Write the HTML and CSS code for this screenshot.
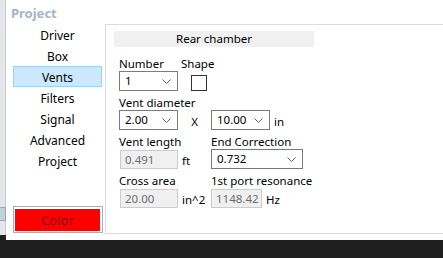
FILE: index.html
```html
<!DOCTYPE html>
<html lang="en">
<head>
    <meta charset="UTF-8">
    <title>Project</title>
    <link rel="stylesheet" href="styles.css">
</head>
<body>
    <div class="screen">
        <div class="edge">
            <div class="edge-icon"></div>
        </div>
        <div class="window">
            <div class="title">Project</div>
            <div class="main">
                <div class="nav">
                    <div class="nav-item">Driver</div>
                    <div class="nav-item">Box</div>
                    <div class="nav-item active">Vents</div>
                    <div class="nav-item">Filters</div>
                    <div class="nav-item">Signal</div>
                    <div class="nav-item">Advanced</div>
                    <div class="nav-item">Project</div>
                    <div class="color-btn"><div class="color-fill">Color</div></div>
                </div>
                <div class="panel">
                    <div class="header">Rear chamber</div>

                    <div class="row">
                        <div class="cell narrow">
                            <div class="label">Number</div>
                            <div class="line">
                                <div class="combo w59"><span>1</span>
                                    <svg width="9" height="5" viewBox="0 0 9 5"><path d="M0.5 0.5 L4.5 4.5 L8.5 0.5" fill="none" stroke="#606060" stroke-width="1"/></svg>
                                </div>
                            </div>
                        </div>
                        <div class="cell">
                            <div class="label">Shape</div>
                            <div class="line"><div class="check"></div></div>
                        </div>
                    </div>

                    <div class="row">
                        <div class="cell">
                            <div class="label">Vent diameter</div>
                            <div class="line">
                                <div class="combo w59"><span>2.00</span>
                                    <svg width="9" height="5" viewBox="0 0 9 5"><path d="M0.5 0.5 L4.5 4.5 L8.5 0.5" fill="none" stroke="#606060" stroke-width="1"/></svg>
                                </div>
                                <div class="times">X</div>
                                <div class="combo w59"><span>10.00</span>
                                    <svg width="9" height="5" viewBox="0 0 9 5"><path d="M0.5 0.5 L4.5 4.5 L8.5 0.5" fill="none" stroke="#606060" stroke-width="1"/></svg>
                                </div>
                                <div class="unit">in</div>
                            </div>
                        </div>
                    </div>

                    <div class="row">
                        <div class="cell wide">
                            <div class="label">Vent length</div>
                            <div class="line">
                                <div class="field w58">0.491</div>
                                <div class="unit">ft</div>
                            </div>
                        </div>
                        <div class="cell">
                            <div class="label">End Correction</div>
                            <div class="line">
                                <div class="combo w92"><span>0.732</span>
                                    <svg width="9" height="5" viewBox="0 0 9 5"><path d="M0.5 0.5 L4.5 4.5 L8.5 0.5" fill="none" stroke="#606060" stroke-width="1"/></svg>
                                </div>
                            </div>
                        </div>
                    </div>

                    <div class="row">
                        <div class="cell wide">
                            <div class="label">Cross area</div>
                            <div class="line">
                                <div class="field w58">20.00</div>
                                <div class="unit">in^2</div>
                            </div>
                        </div>
                        <div class="cell">
                            <div class="label">1st port resonance</div>
                            <div class="line">
                                <div class="field w51">1148.42</div>
                                <div class="unit">Hz</div>
                            </div>
                        </div>
                    </div>
                </div>
            </div>
        </div>
    </div>
</body>
</html>
```

FILE: styles.css
```css
html, body {
    margin: 0;
    padding: 0;
}
body {
    width: 443px;
    height: 258px;
    overflow: hidden;
    background-color: #1f1f1f;
    font-family: "Noto Sans", "Open Sans", sans-serif;
    font-size: 11.5px;
    color: #000;
}
.screen {
    display: flex;
    height: 240px;
}
.edge {
    width: 6px;
    height: 235px;
    background-color: #e4e6ea;
    border-right: 1px solid #c9ccd1;
    display: flex;
    flex-direction: column;
    justify-content: flex-end;
    padding-bottom: 14px;
    box-sizing: border-box;
}
.edge-icon {
    width: 5px;
    height: 12px;
    background-color: #c6d0dc;
    border: 1px solid #9aa6b4;
    border-left: none;
}
.window {
    flex: 1;
    background-color: #fff;
    display: flex;
    flex-direction: column;
}
.title {
    height: 24px;
    padding-left: 5px;
    font-size: 13px;
    font-weight: bold;
    line-height: 26px;
    color: #a6b4c8;
}
.main {
    display: flex;
    height: 210px;
}
.nav {
    width: 99px;
    padding: 0 3px 0 7px;
    box-sizing: border-box;
    display: flex;
    flex-direction: column;
    font-size: 12px;
}
.nav-item {
    height: 21px;
    line-height: 21px;
    text-align: center;
    border: 1px solid transparent;
    box-sizing: border-box;
}
.nav-item.active {
    background-color: #cce8ff;
    border-color: #99d1ff;
}
.color-btn {
    margin-top: auto;
    margin-bottom: 1px;
    width: 90px;
    height: 27px;
    border: 1px solid #adadad;
    padding: 2px 2px 1px 1px;
    box-sizing: border-box;
}
.color-fill {
    height: 100%;
    background-color: #ff0000;
    color: #8a0a0a;
    text-align: center;
    line-height: 22px;
    font-size: 13px;
}
.panel {
    flex: 1;
    border-top: 1px solid #dcdcdc;
    border-left: 1px solid #dcdcdc;
    border-bottom: 1px solid #dcdcdc;
    padding-left: 13px;
}
.header {
    width: 200px;
    height: 16px;
    margin: 6px 0 9px -5px;
    background-color: #f0f0f0;
    text-align: center;
    line-height: 16px;
}
.row {
    display: flex;
    margin-bottom: 4px;
}
.cell.narrow {
    width: 62px;
}
.cell.wide {
    width: 92px;
}
.label {
    height: 15px;
    line-height: 15px;
    white-space: nowrap;
}
.line {
    display: flex;
    align-items: center;
    height: 20px;
}
.combo {
    height: 20px;
    border: 1px solid #7a7a7a;
    box-sizing: border-box;
    background-color: #fff;
    display: flex;
    align-items: center;
    justify-content: space-between;
    padding: 0 6px 0 5px;
}
.combo span {
    line-height: 18px;
}
.w59 {
    width: 59px;
}
.w92 {
    width: 92px;
}
.w58 {
    width: 58px;
    margin-left: 1px;
}
.w51 {
    width: 51px;
}
.field {
    height: 19px;
    border: 1px solid #cccccc;
    box-sizing: border-box;
    background-color: #f0f0f0;
    color: #6d6d6d;
    line-height: 17px;
    padding-left: 4px;
    white-space: nowrap;
    overflow: hidden;
}
.times {
    width: 33px;
    text-align: center;
    padding-top: 3px;
}
.unit {
    margin-left: 4px;
    padding-top: 3px;
}
.check {
    width: 16px;
    height: 16px;
    border: 1px solid #333;
    box-sizing: border-box;
    margin-left: 10px;
    margin-top: 3px;
}
```
